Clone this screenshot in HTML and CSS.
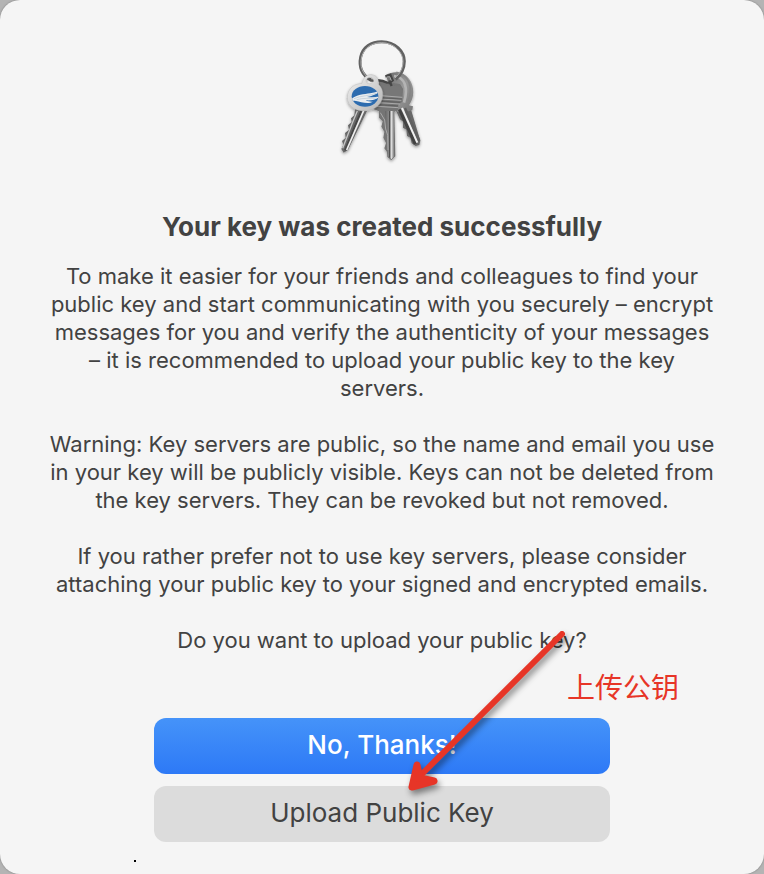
FILE: index.html
```html
<!DOCTYPE html>
<html lang="en">
<head>
<meta charset="utf-8">
<meta name="viewport" content="width=device-width, initial-scale=1">
<title>Your key was created successfully</title>
<link rel="stylesheet" href="styles.css">
</head>
<body>
<main class="dialog">
  <svg class="keys" viewBox="0 0 315 420" role="img" aria-label="Keys">
    <defs>
      <linearGradient id="blade" x1="0" x2="1">
        <stop offset="0" stop-color="#666"/><stop offset=".4" stop-color="#888"/><stop offset=".5" stop-color="#333"/><stop offset=".62" stop-color="#eee"/><stop offset="1" stop-color="#666"/>
      </linearGradient>
      <linearGradient id="head" x1="0" y1="0" x2="1" y2="1">
        <stop offset="0" stop-color="#686868"/><stop offset=".5" stop-color="#999"/><stop offset="1" stop-color="#777"/>
      </linearGradient>
      <linearGradient id="tag" x1="0" y1="0" x2="1" y2="1">
        <stop offset="0" stop-color="#f2f2f2"/><stop offset="1" stop-color="#b5b5b5"/>
      </linearGradient>
      <clipPath id="disc"><ellipse cx="105" cy="199" rx="40" ry="31"/></clipPath>
      <filter id="soft" x="-20%" y="-20%" width="140%" height="140%"><feDropShadow dx="0" dy="4" stdDeviation="4" flood-opacity=".4"/></filter>
    </defs>
    <g filter="url(#soft)">
      <path d="M196 238L241 232L271 332L268 345L257 348L245 340L241 323L231 318L229 299L219 293L219 275L210 268Z" fill="#686868"/>
      <path d="M168 135C195 119 228 125 243 156C257 187 247 211 237 226L249 229L247 240L236 244L202 246L194 226Z" fill="url(#head)"/>
      <path d="M192 138C224 142 236 171 222 218" fill="none" stroke="#b4b4b4" stroke-width="8"/>
      <path d="M199 127C238 136 250 172 235 213" fill="none" stroke="#858585" stroke-width="5"/>
      <path d="M208 238L256 342" stroke="#424242" stroke-width="9"/>
      <path d="M216 234L262 338" stroke="#f1f1f1" stroke-width="6"/>
      <path d="M225 234L268 332" stroke="#606060" stroke-width="7"/>
      <path d="M146 153L210 162L219 176L217 215L204 225L204 240L193 245L196 379L184 391L172 381L171 366L163 355L168 339L160 323L163 305L154 290L158 274L147 263L147 244L131 237L135 218L151 209Z" fill="#747474"/>
      <path d="M153 164L209 169L217 181L213 207L151 204Z" fill="#777"/>
      <path d="M153 197L217 202M150 207L214 211M145 218L210 222M140 229L204 233" stroke="#aaa" stroke-width="3"/>
      <path d="M151 203L215 207M146 213L210 217M142 224L205 228" stroke="#5f5f5f" stroke-width="3"/>
      <path d="M165 243H191L194 378L184 388L174 378Z" fill="url(#blade)"/>
      <path d="M151 248L164 270L167 297L173 316L174 360" fill="none" stroke="#aaa" stroke-width="3"/>
    </g>
    <path d="M123 151C96 135 86 111 92 81C99 51 124 35 155 35C196 35 223 65 223 94C223 120 211 136 197 148" fill="none" stroke="#626262" stroke-width="9"/>
    <path d="M119 147C97 132 89 108 95 81C102 53 126 38 155 38C192 38 219 67 219 94C219 118 208 132 195 144" fill="none" stroke="#b1b1b1" stroke-width="3"/>
    <path d="M128 153C144 148 159 151 174 159M166 139L181 135L188 151L175 161M178 151L185 168" fill="none" stroke="#454545" stroke-width="7"/>
    <path d="M170 141L179 140L184 152" fill="none" stroke="#aaa" stroke-width="3"/>
    <g filter="url(#soft)">
      <path d="M75 237L111 243L54 360L41 368L34 357L40 344L36 333L47 323L45 309L57 299L54 286L65 276L63 265L73 256Z" fill="#686868"/>
      <path d="M82 243L67 279L38 355" fill="none" stroke="#c5c5c5" stroke-width="4"/>
      <path d="M94 243L45 361" stroke="#464646" stroke-width="6"/>
      <path d="M101 242L50 360" stroke="#eee" stroke-width="5"/>
      <path fill-rule="evenodd" d="M96 160C99 143 111 132 126 134C141 136 148 148 144 162C165 179 162 212 142 229C125 244 91 248 69 234C46 219 47 185 68 169C76 163 86 161 96 160ZM115 143C103 149 108 163 121 161C132 157 133 145 123 142Z" fill="url(#tag)" stroke="#aaa" stroke-width="1"/>
    </g>
    <path d="M117 145C119 151 124 153 130 151" fill="none" stroke="#555" stroke-width="7"/>
    <ellipse cx="105" cy="199" rx="40" ry="31" fill="#2d6caf"/>
    <g clip-path="url(#disc)">
      <path d="M60 212C75 193 102 193 120 190C134 188 143 184 150 182C142 193 127 198 111 201C124 202 139 202 150 199C138 211 121 212 107 211C115 215 123 216 129 215C114 224 91 215 78 213C70 211 65 212 60 217Z" fill="#e9edf0"/>
      <path d="M72 206C94 196 119 198 139 190M80 209C100 203 121 206 140 204" fill="none" stroke="#bac7d1" stroke-width="2"/>
    </g>
  </svg>
  <h1 class="title">Your key was created successfully</h1>
  <div class="message">
    <p>To make it easier for your friends and colleagues to find your<br>public key and start communicating with you securely – encrypt<br>messages for you and verify the authenticity of your messages<br>– it is recommended to upload your public key to the key<br>servers.</p>
    <p>Warning: Key servers are public, so the name and email you use<br>in your key will be publicly visible. Keys can not be deleted from<br>the key servers. They can be revoked but not removed.</p>
    <p>If you rather prefer not to use key servers, please consider<br>attaching your public key to your signed and encrypted emails.</p>
    <p>Do you want to upload your public key?</p>
  </div>
  <div class="actions">
    <button class="button primary" type="button">No, Thanks!</button>
    <button class="button" type="button">Upload Public Key</button>
    <svg class="arrow" viewBox="0 0 180 180" aria-hidden="true">
      <path d="M158 14L12 160" stroke-width="6"/>
      <path class="arrow-head" d="M13 145L8 167L30 161L16 158Z"/>
    </svg>
    <span class="note" lang="zh-CN">上传公钥</span>
  </div>
  <span class="speck"></span>
</main>
</body>
</html>
```
FILE: styles.css
```css
* { box-sizing: border-box; }

body {
  margin: 0;
  background: #b4b4b4;
  color: #424242;
  font-family: Inter, "Noto Sans CJK SC", sans-serif;
}

.dialog {
  position: relative;
  display: flex;
  flex-direction: column;
  align-items: center;
  min-height: 100vh;
  padding: 30px 24px 32px;
  border-radius: 20px;
  background: #f5f5f5;
  box-shadow: 0 0 2px #777;
  text-align: center;
}

.keys {
  width: 105px;
  height: 140px;
}

.title {
  margin: 41px 0 19px;
  font-size: 26px;
  line-height: 32px;
  font-weight: 700;
}

.message {
  font-size: 22px;
  line-height: 28px;
}

.message p { margin: 0 0 28px; }

.actions {
  position: relative;
  display: grid;
  gap: 12px;
  width: 456px;
  max-width: 100%;
  margin-top: 36px;
}

.button {
  height: 56px;
  padding: 0 16px 2px;
  border: 0;
  border-radius: 12px;
  background: #dcdcdc;
  color: #424242;
  font: 400 26px/32px Inter, sans-serif;
}

.primary {
  background: linear-gradient(#4593f9, #2d79f6);
  color: #fff;
  font-weight: 500;
}

.arrow {
  position: absolute;
  top: -98px;
  left: 250px;
  width: 180px;
  height: 180px;
  fill: none;
  stroke: #e73527;
  stroke-linecap: round;
  stroke-linejoin: round;
  filter: drop-shadow(2px 4px 3px rgb(0 0 0 / 45%));
  pointer-events: none;
}

.arrow-head {
  fill: #e73527;
  stroke-width: 7px;
}

.note {
  position: absolute;
  top: -52px;
  left: 413px;
  color: #e73527;
  font: 400 28px/40px "Noto Sans CJK SC", sans-serif;
  white-space: nowrap;
}

.speck {
  position: absolute;
  bottom: 12px;
  left: 134px;
  width: 2px;
  height: 2px;
  background: #000;
}
```
